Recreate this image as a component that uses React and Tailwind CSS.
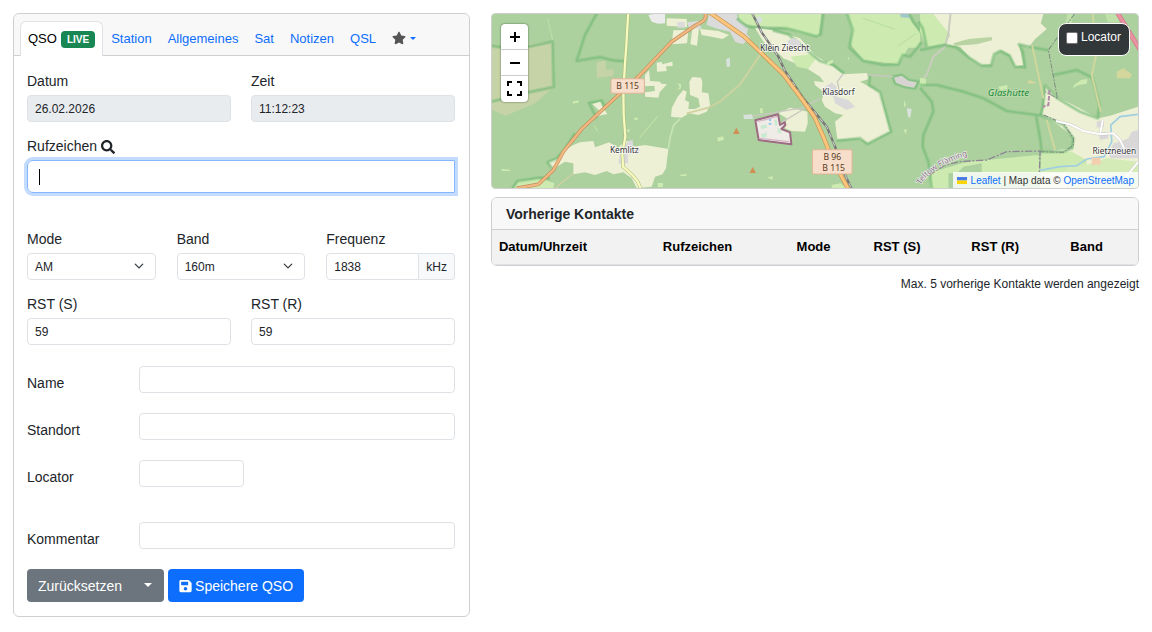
import { FaSave, FaSearch, FaStar } from 'react-icons/fa'

const TABS = ['Station', 'Allgemeines', 'Sat', 'Notizen', 'QSL']
const COLUMNS = ['Datum/Uhrzeit', 'Rufzeichen', 'Mode', 'RST (S)', 'RST (R)', 'Band']

const FIELD = 'h-[27px] w-full min-w-0 rounded border border-[#dee2e6] px-[7px] text-xs text-[#212529] outline-none'

function Field({ id, label, className = '', ...props }) {
  return (
    <div className={className}>
      <label htmlFor={id} className="mb-[3px] block">{label}</label>
      <input id={id} className={`${FIELD} read-only:bg-[#e9ecef]`} {...props} />
    </div>
  )
}

function SelectField({ id, label, options }) {
  return (
    <div className="col-span-4">
      <label htmlFor={id} className="mb-[3px] block">{label}</label>
      <div className="relative">
        <select id={id} className={`${FIELD} appearance-none border-[#ced4da] bg-white`}>
          {options.map(o => <option key={o}>{o}</option>)}
        </select>
        <svg viewBox="0 0 16 16" className="pointer-events-none absolute top-2 right-3 size-[10px]" fill="none" stroke="#343a40" strokeWidth="2" strokeLinecap="round" strokeLinejoin="round">
          <path d="m2 5 6 6 6-6" />
        </svg>
      </div>
    </div>
  )
}

function RowField({ id, label, short }) {
  return (
    <div className="grid grid-cols-12 gap-x-5">
      <label htmlFor={id} className="col-span-3 pt-[7px] -mb-px">{label}</label>
      <div className="col-span-9">
        <input id={id} className={`${FIELD} block ${short ? 'max-w-1/3' : ''}`} />
      </div>
    </div>
  )
}

function Caret({ className = '' }) {
  return <span className={`inline-block border-x-4 border-t-4 border-x-transparent ${className}`} />
}

// wide soft band with a thinner core, as reserve boundaries are usually drawn
function Boundary({ d }) {
  return (
    <g fill="none" stroke="#6fb873" strokeLinejoin="round">
      <path d={d} strokeWidth="12" strokeOpacity=".3" />
      <path d={d} strokeWidth="5" strokeOpacity=".5" />
    </g>
  )
}

// terrain is drawn in three side-by-side sections, each with its own origin
function MapTiles() {
  return (
    <svg viewBox="0 0 1938 522" preserveAspectRatio="xMidYMid slice" className="block h-full w-full" fontFamily="'Noto Sans', sans-serif" aria-hidden="true">
      <rect width="1938" height="522" fill="#add19e" />

      {/* west */}
      <g transform="translate(-21 -27)">
        <path d="M21 122 50 127 205 108 207 245 150 295 62 332 21 315Z" fill="#c5d3a6" />
        <Boundary d="M15 122 50 127 130 125 203 110 206 246 130 262 15 291" />
        <Boundary d="M337 22 300 90 275 168 345 156 385 166 418 169" />
        <path d="M188 42 203 105M327 360 338 380M464 398 518 334" stroke="#c0e0a8" strokeWidth="3" />
        <path d="M335 172 362 167 364 195 386 193 385 213 335 219Z" fill="#c5d3a6" />
        <Boundary d="M335 340 312 294 350 287 360 305" />
        <path d="M322 297 346 290 352 305 367 327 338 333 344 318Z" fill="#eef0d5" />
        <path d="M262 290 280 286 282 292 264 296ZM448 338h10v6h-10zM425 374l8-2 1 8-8 1z" fill="#cdebb0" />
        <path d="M577 235 588 238 588 250 577 256 584 246Z" fill="#cdebb0" />
        <path d="M190 470 214 462 240 435 265 420 285 412 325 408 330 427 350 420 372 412 400 428 420 408 440 408 445 425 480 420 550 432 543 490 532 508 510 515 500 545 455 549 440 520 415 502 385 508 365 498 330 510 300 502 265 508 265 475 240 470 200 495Z" fill="#eef0d5" />
        <Boundary d="M205 495 188 472 215 460 240 432 270 385" />
        <path d="M428 408 443 405 445 428 462 427 463 446 428 448 430 475 400 476 405 445Z" fill="#dad9d9" />
        <path d="M85 549 100 528 165 520 208 535 205 549Z" fill="#cdebb0" />
        <Boundary d="M82 549 98 528 165 518 195 520" />
        <path d="M265 505 212 548" stroke="#d8d1a5" strokeWidth="3" />
        <path d="M515 173 530 171 532 178 562 170 563 183 543 184 545 198 516 200ZM480 210 492 195 495 228 525 230 529 236 546 238 524 262 520 278 480 275 480 262 510 258 508 242 480 244Z" fill="#eef0d5" />
        <path d="M613 230 622 216 648 218 652 230 650 262 670 265 675 300 665 320 640 330 612 325 590 338 558 335 560 310 578 275 595 255 605 260 600 285 612 292 610 312 630 312 645 305 640 280 615 270Z" fill="#eef0d5" />
        <path d="M490 30 505 27 540 27 540 55 520 56 500 50Z" fill="#ececec" />
        <path d="M545 40 605 42 606 66 545 62ZM565 76 610 75 606 115 560 118ZM622 70 642 68 636 122 616 118ZM645 72 700 78 732 90 712 102 680 95 650 90Z" fill="#eef0d5" />
        <path d="M575 52 598 50 600 68 578 68ZM606 52 640 48 650 72 612 68Z" fill="#dcdbdb" />
        <path d="M550 430 556 395 566 360 585 342" fill="none" stroke="#c6e5b2" strokeWidth="5" />
        <path d="M518 534h16v12h-16zM586 509l18-2v6h-18zM50 492l25 2v4H50zM696 398l18-4 3 10-18 6z" fill="#cdebb0" />
        <path d="M430 22 427 65 424 120 420 175 415 260 416 330 421 395 412 445 414 485 440 508 458 530 468 552" fill="none" stroke="#a7b678" strokeWidth="10" />
        <path d="M430 22 427 65 424 120 420 175 415 260 416 330 421 395 412 445 414 485 440 508 458 530 468 552" fill="none" stroke="#f7fabf" strokeWidth="7" />
      </g>

      {/* centre */}
      <g transform="translate(624 -27)">
        <path d="M27 27H110L118 50 145 66 140 88 150 98 128 118 105 110 90 80 55 72 20 60Z" fill="#dcdbdb" />
        <path d="M115 27H365L355 95 300 85 240 65 155 62 120 50Z" fill="#cdebb0" />
        <Boundary d="M110 40 140 64 200 72 260 70 350 94 362 88 370 22" />
        <path d="M440 27 455 75 452 118 490 165 595 178 625 128 650 128 660 110V80L635 50 620 27Z" fill="#cdebb0" />
        <Boundary d="M440 22 458 75 448 128 490 168 550 180 595 178 608 150 630 155 665 112" />
        <Boundary d="M625 22 640 50 665 85" />
        <path d="M488 40 585 73M648 85 592 125" stroke="#b9dda2" strokeWidth="3" />
        <path d="M600 27h24l6 12-28-2z" fill="#9fc7c8" />
        <path d="M165 68 220 76 300 100 345 150 400 185 430 208 500 204 506 222 480 230 540 262 570 380 505 415 475 400 412 404 405 350 430 330 405 325 375 305 365 285 372 262 345 240 342 228 372 232 360 215 320 190 250 160 235 145 190 110Z" fill="#eef0d5" />
        <path d="M272 155 330 148 348 160 325 192 290 185Z" fill="#cdebb0" />
        <Boundary d="M218 76 265 88 305 122 360 168 400 180 432 205" />
        <Boundary d="M510 210 507 240 540 262 573 380 502 417 480 400 410 407" />
        <path d="M235 325 270 308 322 320 323 355 315 380 275 378 255 370 260 340Z" fill="#eef0d5" />
        <path d="M262 108 280 98 300 110 300 125 265 130ZM370 250 395 232 410 245 410 275 445 285 465 305 440 315 405 295 400 275 375 270Z" fill="#dad9d9" />
        <Boundary d="M578 215 605 210 625 225 655 230 645 250 612 245 585 235Z" />
        <path d="M582 218 605 212 625 227 650 232 642 248 612 243 588 233Z" fill="#d6d3d1" />
        <path d="M505 210 580 215M130 338 310 308 360 280M245 352 312 312M420 270 412 230 430 205" fill="none" stroke="#c8c8c0" strokeWidth="4" />
        <path d="M180 150 120 238 60 290 25 308-40 325" fill="none" stroke="#d0d3a0" strokeWidth="5" />
        <path d="M165 40 180 32 190 50 175 55ZM78 162 90 158 90 185 80 185ZM620 310 635 312 630 340 624 335ZM130 330 155 328 160 342 132 342Z" fill="#d8e2dc" />
        <path d="M202 517 220 514 216 525ZM395 540 420 535 440 549H395ZM610 375 620 372 618 388ZM612 285 618 300 612 306ZM180 310h8v14h-8zM442 160l5-4v10zM380 172l18-8 2 8-18 10z" fill="#cdebb0" />
        <path d="M166 346 234 328 240 360 254 352 256 360 244 372 270 382 274 418 176 405Z" fill="#efebe6" stroke="#9d6b83" strokeWidth="6" strokeLinejoin="round" />
        <path d="M172 350 232 334M180 400 268 410" stroke="#d5b7c4" strokeWidth="4" />
        <path d="M182 362l16-4 4 10-18 4zM222 345l8-2 2 18-6 2zM182 388l18-6v14l-14 2zM232 370l10 2 2 14-10-2z" fill="#c8ead0" />
        <path d="M207 342h6v6h-6zM206 354h8v5h-8z" fill="#8fc6ef" />
        <path d="M109 368 119 387H99ZM158 486 168 504H148Z" fill="#d08f55" />
        <path d="M155 22 185 82 235 155 255 198 310 280 380 365 405 425 435 510 455 552" fill="none" stroke="#777" strokeWidth="7" />
        <path d="M155 22 185 82 235 155 255 198 310 280 380 365 405 425 435 510 455 552" fill="none" stroke="#ccd3c8" strokeWidth="3" strokeDasharray="15 12" />
        <path d="M28 22 130 93 190 150 250 208 300 275 343 335 372 400 395 460 445 552" fill="none" stroke="#c9924f" strokeWidth="13" />
        <path d="M28 22 130 93 190 150 250 208 300 275 343 335 372 400 395 460 445 552" fill="none" stroke="#fbc57d" strokeWidth="9" />
        <path d="M-550 550-485 538-440 495-410 440-355 372-245 270-185 215-85 110-15 62 10 48 17 36 16 20" fill="none" stroke="#c48e5a" strokeWidth="11" />
        <path d="M-550 550-485 538-440 495-410 440-355 372-245 270-185 215-85 110-15 62 10 48 17 36 16 20" fill="none" stroke="#f0b882" strokeWidth="7" />
      </g>

      {/* east */}
      <g transform="translate(1284 -27)">
        <path d="M0 27H40L92 60 80 115 20 125 0 80Z" fill="#cdebb0" />
        <path d="M40 27H370L362 55 380 72 345 102 325 128 297 118 310 180 285 185 270 150 245 135 225 148 215 178 180 180 150 160 120 125 75 118 90 90Z" fill="#eef0d5" />
        <path d="M100 115 145 102 215 96 216 106 170 118 105 122Z" fill="#b9d3a3" />
        <path d="M92 22 85 85 75 125 40 155 20 210 5 225" fill="none" stroke="#c9cdbd" strokeWidth="6" />
        <path d="M0 218 18 222 18 240 0 245ZM462 240 483 225 502 222 500 236 475 240 458 250ZM235 245 262 240 262 252 240 255Z" fill="#cdebb0" />
        <path d="M442 27h18l-8 38h-18zM555 27h35l8 25h-35z" fill="#cdebb0" opacity=".6" />
        <path d="M375 240 415 278 450 295 535 340 570 332 655 305V549H360L365 440 460 430 462 400 415 360 365 332 372 300Z" fill="#eef0d5" />
        <path d="M365 440 455 440 500 465 500 505 360 505ZM30 520 40 500 140 470 355 450 360 505 85 505 85 549H30Z" fill="#cdebb0" />
        <path d="M440 475 500 480 560 460 655 470V549H440Z" fill="#d4ebb8" />
        <path d="M85 505 100 515 130 485 185 475 185 505Z" fill="#add19e" />
        <Boundary d="M-5 50 8 70 20 125" />
        <Boundary d="M0 135 75 120 110 128 150 160 185 182 213 182 222 148 240 138 268 152 285 185 315 187 308 140 297 118 340 128 385 136" />
        <Boundary d="M400 210 470 195 517 218 538 300 533 340 480 320 412 280 375 242 368 305 362 330" />
        <Boundary d="M0 240 50 240 130 260 190 280 260 318 365 332 430 360 460 400 455 430 430 440 365 440 360 400 348 332" />
        <Boundary d="M0 248 35 290 40 320 10 390 8 425 25 470 35 552" />
        <path d="M336 120 370 280M380 345 405 435M518 27 528 150 515 210 542 320" fill="none" stroke="#d0d79d" strokeWidth="6" />
        <path d="M590 200 610 190 635 208 630 220 590 220ZM320 232 328 225 350 235 330 236Z" fill="#d3d79d" />
        <path d="M590 20 660 135" stroke="#d3738b" strokeWidth="14" />
        <path d="M590 20 660 135" stroke="#e892a2" strokeWidth="10" />
        <path d="M463 27 385 135 412 280 375 260M370 330 430 355 460 400 460 420 430 442 360 440" fill="none" stroke="#7d8d80" strokeWidth="3" strokeDasharray="16 4 5 4" />
        <path d="M388 255 385 300 368 305" fill="none" stroke="#b18ca8" strokeWidth="6" strokeDasharray="14 4" />
        <path d="M26 511 75 480 120 470 200 465 260 440 360 438 358 505" fill="none" stroke="#8d8795" strokeWidth="4" strokeDasharray="22 5 6 5" />
        <path d="M360 496 420 485 470 482 500 462 552 455 575 410 572 360 600 335 655 328" fill="none" stroke="#a0cfe0" strokeWidth="5" />
        <path d="M580 415 605 408 625 400 635 380 655 375V400L655 460H570L568 440ZM530 350 550 345 552 365 530 368ZM535 380 565 382 565 400 540 405Z" fill="#d9d7d7" />
        <path d="M515 458h25l3 20-28 2z" fill="#f3cfaf" />
        <path d="M408 348 450 358 490 378 540 388 580 385 600 405 612 430M540 388 548 345M655 470 610 525" fill="none" stroke="#c4c4c4" strokeWidth="8" />
        <path d="M408 348 450 358 490 378 540 388 580 385 600 405 612 430M540 388 548 345M655 470 610 525" fill="none" stroke="#fff" strokeWidth="6" />
        <path id="district" d="M2 540Q40 474 175 444" fill="none" />
        <text fontSize="24" fill="#8c6f93" stroke="#e9efe2" strokeWidth="4" paintOrder="stroke">
          <textPath href="#district">Teltow Fläming</textPath>
        </text>
      </g>

      {/* road shields */}
      <g fill="#f6decb" stroke="#dfb597" strokeWidth="3">
        <rect x="357" y="194" width="100" height="44" rx="4" />
        <rect x="961" y="407" width="119" height="73" rx="4" />
      </g>
      <g fontSize="26" fill="#5a3a1c" textAnchor="middle">
        <text x="407" y="225">B 115</text>
        <text x="1021" y="438">B 96</text>
        <text x="1025" y="470">B 115</text>
      </g>

      {/* places */}
      <g fontSize="25" fill="#333" stroke="#fff" strokeOpacity=".75" strokeWidth="5" paintOrder="stroke" textAnchor="middle">
        <text x="397" y="417">Kemlitz</text>
        <text x="878" y="110">Klein Ziescht</text>
        <text x="1039" y="243">Klasdorf</text>
        <text x="1801" y="419" textAnchor="start">Rietzneuen</text>
        <text x="1549" y="247" fontSize="29" fontStyle="italic" fill="#208a36" stroke="#c5dfb8">Glashütte</text>
      </g>
    </svg>
  )
}

function MapPanel() {
  return (
    <div className="relative h-44 overflow-hidden rounded border border-[#cfcfcf]">
      <MapTiles />
      <div className="absolute top-[10px] left-[9px] w-[27px] divide-y divide-[#ccc] overflow-hidden rounded-sm bg-white text-black shadow-[0_0_2px_rgba(0,0,0,0.6)]">
        <button type="button" aria-label="Zoom in" className="flex h-[26px] w-full items-center justify-center pl-px">
          <svg viewBox="0 0 12 12" className="size-3" stroke="currentColor" strokeWidth="2"><path d="M6 1v10M1 6h10" /></svg>
        </button>
        <button type="button" aria-label="Zoom out" className="flex h-[26px] w-full items-center justify-center pl-px">
          <svg viewBox="0 0 12 12" className="size-3" stroke="currentColor" strokeWidth="2"><path d="M1 6h10" /></svg>
        </button>
        <button type="button" aria-label="Vollbild" className="flex h-[26px] w-full items-center justify-center pb-px">
          <svg viewBox="0 0 15 15" className="size-[15px]" fill="none" stroke="currentColor" strokeWidth="2">
            <path d="M1 5V1h4M10 1h4v4M14 10v4h-4M5 14H1v-4" />
          </svg>
        </button>
      </div>
      <label className="absolute top-[9px] right-2 flex h-[33px] items-start gap-[3px] rounded-lg border border-white bg-[#323739] pt-[5px] pr-2 pl-[7px] text-xs leading-4 text-white">
        <input type="checkbox" className="mt-[3px] size-3 appearance-none rounded-xs border border-[#767676] bg-white" />
        Locator
      </label>
      <div className="absolute right-0 bottom-0 flex h-4 items-center bg-white/80 px-1 text-[10px] whitespace-pre text-[#333]">
        <svg viewBox="0 0 10 6" className="mr-1 h-[7px] w-[10px]" preserveAspectRatio="none" aria-hidden="true">
          <path fill="#4c7be1" d="M0 0h10v3H0z" />
          <path fill="#ffd500" d="M0 3h10v3H0z" />
        </svg>
        <a href="#leaflet" className="text-[#0d6efd]">Leaflet</a> | Map data © <a href="#osm" className="text-[#0d6efd]">OpenStreetMap</a>
      </div>
    </div>
  )
}

function PreviousContacts() {
  return (
    <section className="mt-2">
      <div className="overflow-hidden rounded-md border border-[#cfcfcf]">
        <h2 className="border-b border-[#cfcfcf] bg-[#f8f8f8] px-[14px] pt-[6px] pb-1 font-bold">Vorherige Kontakte</h2>
        <table className="w-full bg-[#f2f2f2] text-[13px] text-black">
          <thead>
            <tr className="border-b border-[#dee2e6]">
              {COLUMNS.map(c => (
                <th key={c} className="p-[7px] text-left leading-5 font-bold">{c}</th>
              ))}
            </tr>
          </thead>
        </table>
      </div>
      <p className="mt-2 text-right text-xs leading-5">Max. 5 vorherige Kontakte werden angezeigt</p>
    </section>
  )
}

function QsoForm() {
  return (
    <form className="rounded-md border border-[#cfcfcf]" onSubmit={e => e.preventDefault()}>
      <nav className="flex items-end rounded-t-md border-b border-[#cfcfcf] bg-[#f8f8f8] px-[6px] pt-[7px] text-[13px] leading-5">
        <a href="#qso" className="-mb-px flex items-center gap-1 rounded-t-md border border-b-0 border-[#dee2e6] bg-white px-[7px] pt-[7px] pb-[7px] text-black">
          QSO
          <span className="rounded bg-[#198754] px-[6px] text-[10px] leading-[17px] font-bold text-white">LIVE</span>
        </a>
        {TABS.map(t => (
          <a key={t} href={`#${t.toLowerCase()}`} className="px-2 pt-[7px] pb-[6px] text-[#0d6efd]">{t}</a>
        ))}
        <button type="button" aria-label="Favoriten" className="flex h-[33px] items-center gap-1 px-2 pb-px text-[#0d6efd]">
          <FaStar className="size-[14px] text-[#555]" />
          <span className="inline-block border-x-3 border-t-3 border-x-transparent" />
        </button>
      </nav>

      <div className="pt-[15px] pr-[14px] pb-[14px] pl-[13px]">
        <div className="grid grid-cols-12 gap-x-5">
          <Field id="date" label="Datum" className="col-span-6" defaultValue="26.02.2026" readOnly />
          <Field id="time" label="Zeit" className="col-span-6" defaultValue="11:12:23" readOnly />
        </div>

        <div className="mt-[14px]">
          <label htmlFor="callsign" className="mb-[3px] flex items-center gap-1">
            Rufzeichen <FaSearch className="size-[14px]" />
          </label>
          <div className="relative">
            <input id="callsign" className="block h-[33px] w-full rounded-l-md border border-[#86b7fe] px-[11px] text-sm caret-transparent shadow-[0_0_0_3px_#c2dbfe] outline-none" />
            <span className="pointer-events-none absolute top-[9px] left-3 h-4 w-px bg-black" />
          </div>
        </div>

        <div className="mt-9 grid grid-cols-12 gap-x-[21px]">
          <SelectField id="mode" label="Mode" options={['AM', 'CW', 'FM', 'SSB']} />
          <SelectField id="band" label="Band" options={['160m', '80m', '40m', '20m']} />
          <div className="col-span-4">
            <label htmlFor="freq" className="mb-[3px] block">Frequenz</label>
            <div className="flex">
              <input id="freq" defaultValue="1838" className="h-[27px] w-full min-w-0 rounded-l border border-[#dee2e6] px-[7px] text-xs outline-none" />
              <span className="flex items-center rounded-r border border-l-0 border-[#dee2e6] bg-[#f8f9fa] px-[7px] text-xs">kHz</span>
            </div>
          </div>
        </div>

        <div className="mt-[14px] grid grid-cols-12 gap-x-5">
          <Field id="rst-s" label="RST (S)" className="col-span-6" defaultValue="59" />
          <Field id="rst-r" label="RST (R)" className="col-span-6" defaultValue="59" />
        </div>

        <div className="mt-[21px] flex flex-col gap-5">
          <RowField id="name" label="Name" />
          <RowField id="qth" label="Standort" />
          <RowField id="locator" label="Locator" short />
        </div>
        <div className="mt-[35px]">
          <RowField id="comment" label="Kommentar" />
        </div>

        <div className="mt-5 flex gap-1 text-white">
          <div className="flex h-[33px] overflow-hidden rounded bg-[#6c757d]">
            <button type="reset" className="pt-px pr-[11px] pl-[11px]">Zurücksetzen</button>
            <button type="button" aria-label="Weitere Optionen" className="flex items-center pr-3 pl-[11px]">
              <Caret className="mb-px" />
            </button>
          </div>
          <button type="submit" className="flex h-[33px] items-center gap-[3px] rounded bg-[#0d6efd] px-[11px] pt-px">
            <FaSave className="h-[14px] w-[13px]" /> Speichere QSO
          </button>
        </div>
      </div>
    </form>
  )
}

export default function App() {
  return (
    <main className="grid min-h-screen grid-cols-12 content-start items-start gap-x-[21px] bg-white p-[13px] font-['Liberation_Sans',Arial,sans-serif] text-sm leading-[21px] text-[#212529]">
      <div className="col-span-5">
        <QsoForm />
      </div>
      <div className="col-span-7">
        <MapPanel />
        <PreviousContacts />
      </div>
    </main>
  )
}
